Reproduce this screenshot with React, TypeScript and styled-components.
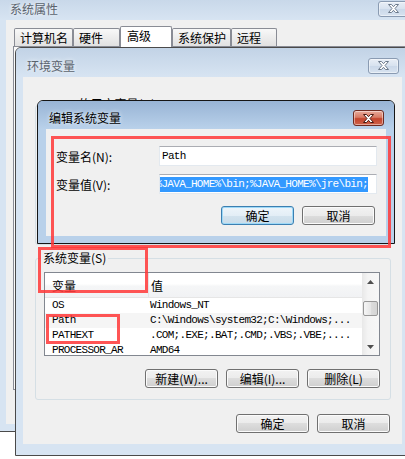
import React from 'react';
import styled, { createGlobalStyle } from 'styled-components';

const CJK = `"Noto Sans CJK SC", "Noto Sans", sans-serif`;
const MONO = `"Liberation Mono", "DejaVu Sans Mono", monospace`;

const Global = createGlobalStyle`
  html, body { margin: 0; padding: 0; background: #fff; }
  body { font-family: ${CJK}; font-size: 12px; color: #000; overflow: hidden; }
  * { box-sizing: border-box; }
`;

const Desktop = styled.div`
  position: relative;
  width: 405px;
  height: 459px;
  overflow: hidden;
  background: #fff;
`;

type WinProps = {
  $x: number; $y: number; $w: number; $h: number;
  $bottom: number; $z: number; $active?: boolean;
};

const Window = styled.div<WinProps>`
  position: absolute;
  left: ${p => p.$x}px;
  top: ${p => p.$y}px;
  width: ${p => p.$w}px;
  height: ${p => p.$h}px;
  z-index: ${p => p.$z};
  display: flex;
  flex-direction: column;
  border: 1px solid ${p => (p.$active ? '#151515' : '#4a4a4a')};
  border-radius: 6px 6px 0 0;
  padding-bottom: ${p => p.$bottom}px;
  background: ${p => (p.$active ? '#b9d1ea' : '#d7e4f2')};
`;

const TitleBar = styled.div<{ $h: number; $active?: boolean }>`
  flex: none;
  height: ${p => p.$h}px;
  display: flex;
  align-items: center;
  padding: 6px 10px 0 11px;
  border-radius: 5px 5px 0 0;
  background: ${p =>
    p.$active
      ? 'linear-gradient(#98b4d5, #b9d1ea)'
      : 'linear-gradient(#c2d3e6, #d7e4f2)'};
`;

const Title = styled.span<{ $active?: boolean }>`
  flex: 1;
  font-size: 12px;
  line-height: 14px;
  white-space: nowrap;
  color: ${p => (p.$active ? '#000' : '#5a636d')};
  text-shadow: 0 0 4px rgba(255, 255, 255, 0.95);
`;

const CloseBox = styled.div<{ $active?: boolean }>`
  width: 31px;
  height: 16px;
  border-radius: 3px;
  border: 1px solid ${p => (p.$active ? '#6e2a20' : '#8a9bb2')};
  background: ${p =>
    p.$active
      ? 'linear-gradient(#e8ab9c, #d87a64 45%, #c3442d 55%, #cf6248)'
      : 'linear-gradient(#e8eef6, #d7e2ef 50%, #cad8e9 50%, #d8e3f0)'};
  box-shadow: inset 0 0 0 1px rgba(255, 255, 255, 0.45);
  display: flex;
  align-items: center;
  justify-content: center;
`;

const CloseButton = ({ active }: { active?: boolean }) => (
  <CloseBox $active={active}>
    <svg width="13" height="11" viewBox="0 0 13 11">
      <path
        d="M1.5 1.5h3l2 2.2 2-2.2h3l-3.5 4 3.5 4h-3l-2-2.2-2 2.2h-3l3.5-4z"
        fill="#fff"
        stroke={active ? '#4a1a12' : '#6c7a8c'}
        strokeWidth="1"
        strokeLinejoin="round"
      />
    </svg>
  </CloseBox>
);

const Body = styled.div<{ $side: number }>`
  flex: 1;
  min-height: 0;
  margin: 0 ${p => p.$side}px;
  background: #f0f0f0;
  display: flex;
  flex-direction: column;
  overflow: hidden;
`;

/* ---------- System properties (back window) ---------- */

const TabStrip = styled.div`
  position: relative;
  z-index: 1;
  display: flex;
  align-items: flex-start;
  height: 21px;
  margin: 6px 0 -1px 8px;
`;

const Tab = styled.div<{ $w: number; $sel?: boolean }>`
  width: ${p => p.$w}px;
  height: ${p => (p.$sel ? 21 : 18)}px;
  margin-top: ${p => (p.$sel ? 0 : 2)}px;
  border: 1px solid #898c95;
  border-bottom: none;
  border-radius: 2px 2px 0 0;
  padding: ${p => (p.$sel ? '1px 0 0 6px' : '1px 0 0 5px')};
  line-height: 15px;
  white-space: nowrap;
  background: ${p => (p.$sel ? '#fff' : 'linear-gradient(#f8f8f8, #e1e1e1)')};
`;

const TabPanel = styled.div`
  height: 344px;
  margin: 0 0 0 7px;
  border: 1px solid #898c95;
  background: #fafafa;
`;

/* ---------- Environment variables ---------- */

const EnvContent = styled.div`
  display: flex;
  flex-direction: column;
  padding: 20px 11px 0 12px;
`;

const Group = styled.fieldset`
  margin: 0;
  min-width: 0;
  border: 1px solid #d5dfe5;
  border-radius: 3px;
  padding: 7px 10px 11px 8px;
`;

const UserGroup = styled(Group)`
  height: 148px;
`;

const SysGroup = styled(Group)`
  margin-top: 6px;
`;

const Legend = styled.legend`
  margin-left: -3px;
  padding: 0 2px;
  font-size: 12px;
  line-height: 14px;
  white-space: nowrap;
`;

const Mono = styled.span`
  font-family: ${MONO};
  font-size: 11px;
  letter-spacing: -0.7px;
  white-space: pre;
`;

const ListView = styled.div`
  height: 84px;
  border: 1px solid #828790;
  background: #fff;
  display: grid;
  grid-template-columns: 1fr 17px;
  overflow: hidden;
`;

const ListMain = styled.div`
  display: flex;
  flex-direction: column;
  overflow: hidden;
`;

const HeaderRow = styled.div`
  flex: none;
  height: 25px;
  display: grid;
  grid-template-columns: 104px 1fr;
  background: linear-gradient(#ffffff 0%, #ffffff 45%, #f5f6f7 55%, #f1f2f4 100%);
  border-bottom: 1px solid #e6e6e6;
`;

const HeaderCell = styled.div<{ $first?: boolean }>`
  display: flex;
  align-items: center;
  padding-left: ${p => (p.$first ? 7 : 2)}px;
  border-right: ${p => (p.$first ? '1px solid #e3e5e8' : 'none')};
  font-size: 12px;
`;

const Row = styled.div<{ $hover?: boolean }>`
  flex: none;
  height: 15px;
  display: grid;
  grid-template-columns: 104px 1fr;
  background: ${p => (p.$hover ? '#f5f5f5' : 'transparent')};
`;

const Cell = styled.div<{ $first?: boolean }>`
  padding-left: ${p => (p.$first ? 7 : 1)}px;
  font-family: ${MONO};
  font-size: 11px;
  letter-spacing: -0.7px;
  line-height: 15px;
  white-space: nowrap;
  overflow: hidden;
`;

const ScrollBar = styled.div`
  display: flex;
  flex-direction: column;
  background: linear-gradient(to right, #e8e8e8, #f4f4f4 35%, #f7f7f7);
`;

const ScrollArrow = styled.div`
  flex: none;
  height: 17px;
  display: flex;
  align-items: center;
  justify-content: center;
`;

const ScrollTrack = styled.div`
  flex: 1;
  padding: 11px 1px 0 1px;
`;

const Thumb = styled.div`
  height: 15px;
  border: 1px solid #979797;
  border-radius: 2px;
  background: linear-gradient(to right, #f6f6f6, #e6e6e6 50%, #dcdcdc 50%, #d4d4d4);
`;

const Arrow = ({ down }: { down?: boolean }) => (
  <svg width="7" height="4" viewBox="0 0 7 4">
    <path d={down ? 'M0 0h7L3.5 4z' : 'M0 4h7L3.5 0z'} fill="#4f4f4f" />
  </svg>
);

const ButtonRow = styled.div<{ $top: number; $right?: number }>`
  display: flex;
  justify-content: flex-end;
  gap: 8px;
  margin-top: ${p => p.$top}px;
  padding-right: ${p => p.$right ?? 0}px;
`;

const Button = styled.div<{ $w?: number; $default?: boolean }>`
  width: ${p => p.$w ?? 73}px;
  height: 19px;
  border: 1px solid ${p => (p.$default ? '#3c7fb1' : '#707070')};
  border-radius: 3px;
  background: ${p =>
    p.$default
      ? 'linear-gradient(#eef5fa, #e3eef6 50%, #d3e3ee 50%, #c9dcea)'
      : 'linear-gradient(#f2f2f2, #ebebeb 50%, #dddddd 50%, #cfcfcf)'};
  box-shadow: inset 0 0 0 1px ${p => (p.$default ? '#9ed9f7' : '#fbfbfb')};
  display: flex;
  align-items: center;
  justify-content: center;
  font-size: 12px;
  line-height: 14px;
  white-space: nowrap;
`;

/* ---------- Edit dialog ---------- */

const EditContent = styled.div`
  display: flex;
  flex-direction: column;
  gap: 8px;
  padding: 17px 9px 0 10px;
`;

const FieldRow = styled.div`
  display: grid;
  grid-template-columns: 103px 1fr;
  align-items: center;
  height: 20px;
`;

const FieldLabel = styled.span`
  font-size: 12px;
  white-space: nowrap;
`;

const TextBox = styled.div<{ $end?: boolean }>`
  height: 20px;
  border: 1px solid #e3e9ef;
  border-top-color: #abadb3;
  background: #fff;
  display: flex;
  align-items: center;
  justify-content: ${p => (p.$end ? 'flex-end' : 'flex-start')};
  padding: ${p => (p.$end ? '0 8px 0 0' : '0 0 0 2px')};
  overflow: hidden;
  font-family: ${MONO};
  font-size: 11px;
  letter-spacing: -0.7px;
  white-space: nowrap;
`;

const Selection = styled.span`
  flex: none;
  background: #3399ff;
  color: #fff;
  line-height: 15px;
  white-space: nowrap;
`;

const RedBox = styled.div<{ $x: number; $y: number; $w: number; $h: number }>`
  position: absolute;
  left: ${p => p.$x}px;
  top: ${p => p.$y}px;
  width: ${p => p.$w}px;
  height: ${p => p.$h}px;
  border: 3px solid rgba(255, 55, 55, 0.85);
  z-index: 10;
  pointer-events: none;
`;

const tabs: { label: string; w: number; sel?: boolean }[] = [
  { label: '计算机名', w: 59 },
  { label: '硬件', w: 47 },
  { label: '高级', w: 52, sel: true },
  { label: '系统保护', w: 59 },
  { label: '远程', w: 46 },
];

const rows = [
  ['OS', 'Windows_NT'],
  ['Path', 'C:\\Windows\\system32;C:\\Windows;...'],
  ['PATHEXT', '.COM;.EXE;.BAT;.CMD;.VBS;.VBE;....'],
  ['PROCESSOR_AR', 'AMD64'],
];

export default function App() {
  return (
    <>
      <Global />
      <Desktop>
        <Window $x={-2} $y={-10} $w={422} $h={442} $bottom={7} $z={1}>
          <TitleBar $h={29}>
            <Title>系统属性</Title>
            <CloseButton />
          </TitleBar>
          <Body $side={7}>
            <TabStrip>
              {tabs.map(t => (
                <Tab key={t.label} $w={t.w} $sel={t.sel}>
                  {t.label}
                </Tab>
              ))}
            </TabStrip>
            <TabPanel />
          </Body>
        </Window>

        <Window $x={15} $y={47} $w={395} $h={409} $bottom={11} $z={2}>
          <TitleBar $h={29}>
            <Title>环境变量</Title>
            <CloseButton />
          </TitleBar>
          <Body $side={7}>
            <EnvContent>
              <UserGroup>
                <Legend>
                  <Mono>alvin </Mono>的用户变量(U)
                </Legend>
              </UserGroup>
              <SysGroup>
                <Legend>系统变量(S)</Legend>
                <ListView>
                  <ListMain>
                    <HeaderRow>
                      <HeaderCell $first>变量</HeaderCell>
                      <HeaderCell>值</HeaderCell>
                    </HeaderRow>
                    {rows.map(([k, v], i) => (
                      <Row key={k} $hover={i === 1}>
                        <Cell $first>{k}</Cell>
                        <Cell>{v}</Cell>
                      </Row>
                    ))}
                  </ListMain>
                  <ScrollBar>
                    <ScrollArrow>
                      <Arrow />
                    </ScrollArrow>
                    <ScrollTrack>
                      <Thumb />
                    </ScrollTrack>
                    <ScrollArrow>
                      <Arrow down />
                    </ScrollArrow>
                  </ScrollBar>
                </ListView>
                <ButtonRow $top={13}>
                  <Button>新建(W)...</Button>
                  <Button>编辑(I)...</Button>
                  <Button>删除(L)</Button>
                </ButtonRow>
              </SysGroup>
              <ButtonRow $top={14} $right={1}>
                <Button>确定</Button>
                <Button>取消</Button>
              </ButtonRow>
            </EnvContent>
          </Body>
        </Window>

        <Window $x={37} $y={100} $w={358} $h={144} $bottom={7} $z={3} $active>
          <TitleBar $h={28} $active>
            <Title $active>编辑系统变量</Title>
            <CloseButton active />
          </TitleBar>
          <Body $side={8}>
            <EditContent>
              <FieldRow>
                <FieldLabel>变量名(N):</FieldLabel>
                <TextBox>Path</TextBox>
              </FieldRow>
              <FieldRow>
                <FieldLabel>变量值(V):</FieldLabel>
                <TextBox $end>
                  <Selection>%JAVA_HOME%\bin;%JAVA_HOME%\jre\bin;</Selection>
                </TextBox>
              </FieldRow>
              <ButtonRow $top={4} $right={2}>
                <Button $default>确定</Button>
                <Button>取消</Button>
              </ButtonRow>
            </EditContent>
          </Body>
        </Window>

        <RedBox $x={51} $y={136} $w={340} $h={112} />
        <RedBox $x={38} $y={247} $w={110} $h={46} />
        <RedBox $x={46} $y={314} $w={74} $h={30} />
      </Desktop>
    </>
  );
}
